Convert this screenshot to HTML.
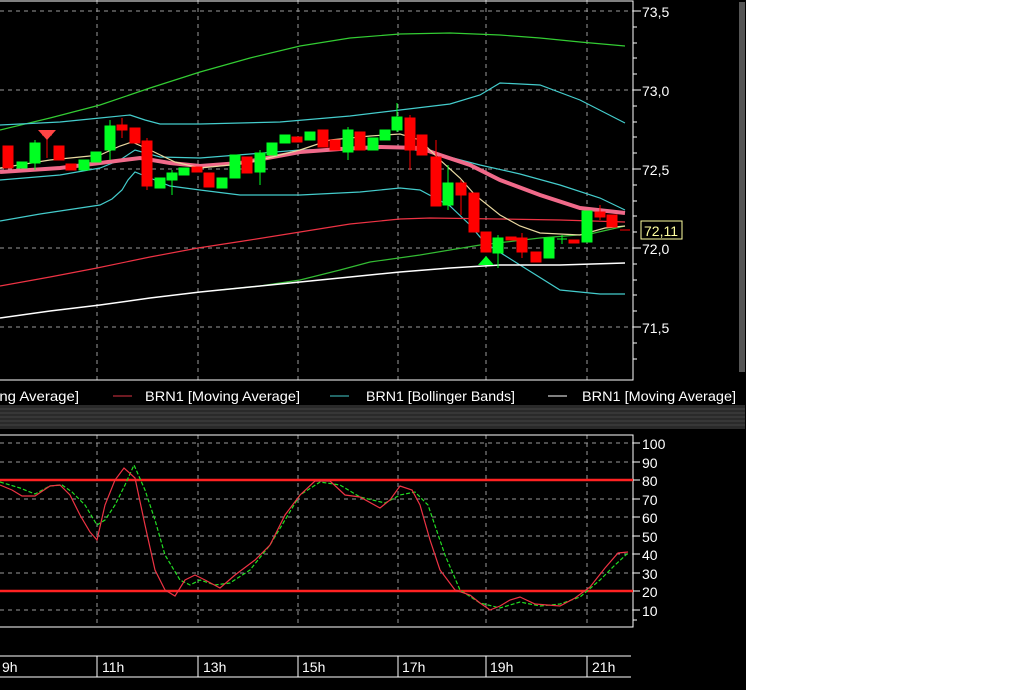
<!DOCTYPE html>
<html><head><meta charset="utf-8"><style>
html,body{margin:0;padding:0;background:#fff;width:1024px;height:690px;overflow:hidden}
svg{display:block}
text{font-family:"Liberation Sans",sans-serif;fill:#fff}
</style></head><body>
<svg width="1024" height="690" viewBox="0 0 1024 690" xmlns="http://www.w3.org/2000/svg">
<rect x="0" y="0" width="746" height="690" fill="#000"/>
<rect x="739" y="2" width="6" height="370" fill="#555"/>
<!-- upper panel -->
<g stroke="#9a9a9a" stroke-dasharray="4,4" stroke-width="1">
<line x1="0" y1="11" x2="633" y2="11"/><line x1="0" y1="90" x2="633" y2="90"/><line x1="0" y1="169" x2="633" y2="169"/><line x1="0" y1="248" x2="633" y2="248"/><line x1="0" y1="327" x2="633" y2="327"/>
<line x1="97" y1="0" x2="97" y2="380"/><line x1="198" y1="0" x2="198" y2="380"/><line x1="298" y1="0" x2="298" y2="380"/><line x1="398" y1="0" x2="398" y2="380"/><line x1="486" y1="0" x2="486" y2="380"/><line x1="587" y1="0" x2="587" y2="380"/>
</g>
<polyline fill="none" stroke="#fff" stroke-width="1" points="0,1 633,1 633,380 0,380"/>
<g stroke="#fff" stroke-width="1">
<line x1="633" y1="11" x2="641" y2="11"/><line x1="633" y1="90" x2="641" y2="90"/><line x1="633" y1="169" x2="641" y2="169"/><line x1="633" y1="248" x2="641" y2="248"/><line x1="633" y1="327" x2="641" y2="327"/>
<line x1="633" y1="27" x2="637" y2="27"/><line x1="633" y1="43" x2="637" y2="43"/><line x1="633" y1="58" x2="637" y2="58"/><line x1="633" y1="74" x2="637" y2="74"/>
<line x1="633" y1="106" x2="637" y2="106"/><line x1="633" y1="122" x2="637" y2="122"/><line x1="633" y1="137" x2="637" y2="137"/><line x1="633" y1="153" x2="637" y2="153"/>
<line x1="633" y1="185" x2="637" y2="185"/><line x1="633" y1="201" x2="637" y2="201"/><line x1="633" y1="216" x2="637" y2="216"/><line x1="633" y1="232" x2="637" y2="232"/>
<line x1="633" y1="264" x2="637" y2="264"/><line x1="633" y1="280" x2="637" y2="280"/><line x1="633" y1="295" x2="637" y2="295"/><line x1="633" y1="311" x2="637" y2="311"/>
<line x1="633" y1="343" x2="637" y2="343"/><line x1="633" y1="359" x2="637" y2="359"/>
</g>
<g font-size="14"><text x="642" y="17">73,5</text><text x="642" y="96">73,0</text><text x="642" y="175">72,5</text><text x="642" y="254">72,0</text><text x="642" y="333">71,5</text></g>
<rect x="641" y="221" width="41" height="18" fill="#000" stroke="#ffffa0"/>
<text x="644" y="236" font-size="14" style="fill:#ffffa0">72,11</text>
<!-- lines -->
<g fill="none">
<polyline stroke="#3c3" stroke-width="1.2" points="0,130 50,118 100,105 150,88 200,72 250,58 300,46 350,38 400,34 450,33 500,35 540,38 580,42 625,46"/>
<polyline stroke="#4cc" stroke-width="1.2" points="0,125 60,122 100,118 130,115 145,120 160,124 200,124 280,122 350,116 400,110 450,104 480,95 500,83 540,85 580,100 625,123"/>
<polyline stroke="#4cc" stroke-width="1.2" points="0,180 60,175 100,168 120,160 135,150 160,157 200,158 300,150 400,148 430,152 480,165 520,174 560,185 600,198 625,210"/>
<polyline stroke="#4cc" stroke-width="1.2" points="0,221 40,214 100,205 112,199 122,190 128,180 135,172 150,178 170,186 200,190 240,195 300,195 360,192 400,188 420,190 450,206 470,225 485,243 520,265 560,290 600,294 625,294"/>
<polyline stroke="#e34" stroke-width="1.2" points="0,286 50,277 97,268 150,257 198,248 250,240 300,232 350,224 400,219 430,218 500,219 560,220 625,222"/>
<polyline stroke="#3b3" stroke-width="1.2" points="220,290 260,286 300,280 340,270 370,262 420,255 480,245 540,238 590,234 625,226"/>
<polyline stroke="#fff" stroke-width="1.5" points="0,318 50,311 100,305 150,298 200,292 250,287 300,282 350,277 400,272 450,268 500,265 560,265 625,263"/>
<polyline stroke="#f06a8a" stroke-width="4" points="0,172 60,168 100,163 140,158 170,163 200,166 240,163 300,152 340,149 380,147 420,148 440,155 470,165 500,180 540,195 580,208 625,213"/>
<polyline stroke="#e8d8a0" stroke-width="1.2" points="0,168 50,160 100,155 120,146 132,142 150,150 175,162 200,168 230,165 260,160 300,150 330,140 370,136 400,134 420,140 440,160 460,178 475,195 500,215 520,226 540,233 580,235 605,228 625,226"/>
</g>
<!-- candles -->
<g stroke-width="1">
<g fill="#f00" stroke="#f00">
<rect x="3" y="146" width="10" height="22"/><rect x="54" y="146" width="10" height="14"/><rect x="66" y="164" width="10" height="6"/><rect x="117" y="125" width="10" height="5"/><line x1="122" y1="118" x2="122" y2="138"/><rect x="130" y="128" width="10" height="15"/><rect x="142" y="141" width="10" height="45"/><line x1="147" y1="138" x2="147" y2="190"/><rect x="192" y="167" width="10" height="5"/><rect x="204" y="173" width="10" height="14"/><rect x="242" y="157" width="10" height="16"/><rect x="292" y="137" width="10" height="5"/><rect x="318" y="130" width="10" height="17"/><rect x="330" y="140" width="10" height="10"/><rect x="355" y="132" width="10" height="18"/><rect x="405" y="118" width="10" height="32"/><line x1="410" y1="115" x2="410" y2="170"/><rect x="417" y="135" width="10" height="20"/><rect x="431" y="157" width="10" height="49"/><line x1="436" y1="140" x2="436" y2="206"/><rect x="456" y="183" width="10" height="12"/><line x1="461" y1="180" x2="461" y2="215"/><rect x="469" y="193" width="10" height="39"/><rect x="481" y="232" width="10" height="20"/><rect x="506" y="237" width="10" height="3"/><rect x="517" y="238" width="10" height="14"/><line x1="522" y1="233" x2="522" y2="258"/><rect x="531" y="252" width="10" height="10"/><rect x="569" y="240" width="10" height="3"/><rect x="595" y="212" width="10" height="5"/><line x1="600" y1="205" x2="600" y2="220"/><rect x="607" y="215" width="10" height="12"/><line x1="620" y1="230" x2="630" y2="230"/>
<line x1="42" y1="135" x2="52" y2="135"/><line x1="47" y1="135" x2="47" y2="158"/>
</g>
<polygon points="38,130 56,130 47,140" fill="#f44"/>
<g fill="#0f2" stroke="#0f2">
<rect x="17" y="162" width="10" height="6"/><rect x="30" y="143" width="10" height="20"/><line x1="35" y1="140" x2="35" y2="170"/><rect x="79" y="160" width="10" height="10"/><rect x="91" y="152" width="10" height="10"/><rect x="105" y="126" width="10" height="24"/><line x1="110" y1="120" x2="110" y2="160"/><rect x="155" y="178" width="10" height="10"/><rect x="167" y="173" width="10" height="7"/><line x1="172" y1="170" x2="172" y2="195"/><rect x="179" y="168" width="10" height="7"/><rect x="217" y="178" width="10" height="10"/><rect x="230" y="155" width="10" height="23"/><rect x="255" y="153" width="10" height="19"/><line x1="260" y1="150" x2="260" y2="185"/><rect x="267" y="143" width="10" height="12"/><rect x="280" y="135" width="10" height="8"/><rect x="305" y="132" width="10" height="8"/><rect x="343" y="130" width="10" height="22"/><line x1="348" y1="127" x2="348" y2="160"/><rect x="368" y="138" width="10" height="12"/><rect x="380" y="130" width="10" height="10"/><rect x="392" y="117" width="10" height="13"/><line x1="397" y1="103" x2="397" y2="132"/><rect x="443" y="183" width="10" height="22"/><line x1="448" y1="165" x2="448" y2="210"/><rect x="493" y="238" width="10" height="15"/><line x1="498" y1="235" x2="498" y2="268"/><rect x="544" y="238" width="10" height="20"/><line x1="557" y1="239" x2="567" y2="239"/><line x1="562" y1="235" x2="562" y2="244"/><rect x="582" y="211" width="10" height="31"/>
</g>
<polygon points="478,265 494,265 486,256" fill="#0f2"/>
</g>
<!-- legend -->
<g font-size="14">
<text x="-4" y="401" textLength="83" lengthAdjust="spacingAndGlyphs">ing Average]</text>
<line x1="113" y1="396" x2="132" y2="396" stroke="#d34"/><text x="145" y="401" textLength="155" lengthAdjust="spacingAndGlyphs">BRN1 [Moving Average]</text>
<line x1="330" y1="396" x2="349" y2="396" stroke="#4cc"/><text x="366" y="401" textLength="149" lengthAdjust="spacingAndGlyphs">BRN1 [Bollinger Bands]</text>
<line x1="548" y1="396" x2="567" y2="396" stroke="#fff"/><text x="582" y="401" textLength="154" lengthAdjust="spacingAndGlyphs">BRN1 [Moving Average]</text>
</g>
<!-- separator -->
<rect x="0" y="405" width="745" height="24" fill="#2a2a2a"/>
<g stroke="#444"><line x1="0" y1="409" x2="745" y2="409"/><line x1="0" y1="413" x2="745" y2="413"/><line x1="0" y1="417" x2="745" y2="417"/><line x1="0" y1="421" x2="745" y2="421"/><line x1="0" y1="425" x2="745" y2="425"/></g>
<!-- lower panel -->
<g stroke="#9a9a9a" stroke-dasharray="4,4">
<line x1="0" y1="443" x2="633" y2="443"/><line x1="0" y1="462" x2="633" y2="462"/><line x1="0" y1="499" x2="633" y2="499"/><line x1="0" y1="517" x2="633" y2="517"/><line x1="0" y1="536" x2="633" y2="536"/><line x1="0" y1="554" x2="633" y2="554"/><line x1="0" y1="573" x2="633" y2="573"/><line x1="0" y1="610" x2="633" y2="610"/>
<line x1="97" y1="435" x2="97" y2="627"/><line x1="198" y1="435" x2="198" y2="627"/><line x1="298" y1="435" x2="298" y2="627"/><line x1="398" y1="435" x2="398" y2="627"/><line x1="486" y1="435" x2="486" y2="627"/><line x1="587" y1="435" x2="587" y2="627"/>
</g>
<polyline fill="none" stroke="#fff" points="0,435 633,435 633,627 0,627"/>
<g stroke="#fff"><line x1="633" y1="443" x2="640" y2="443"/><line x1="633" y1="462" x2="640" y2="462"/><line x1="633" y1="480" x2="640" y2="480"/><line x1="633" y1="499" x2="640" y2="499"/><line x1="633" y1="517" x2="640" y2="517"/><line x1="633" y1="536" x2="640" y2="536"/><line x1="633" y1="554" x2="640" y2="554"/><line x1="633" y1="573" x2="640" y2="573"/><line x1="633" y1="591" x2="640" y2="591"/><line x1="633" y1="610" x2="640" y2="610"/><line x1="633" y1="620" x2="637" y2="620"/></g>
<g font-size="14"><text x="642" y="449">100</text><text x="642" y="468">90</text><text x="642" y="486">80</text><text x="642" y="505">70</text><text x="642" y="523">60</text><text x="642" y="542">50</text><text x="642" y="560">40</text><text x="642" y="579">30</text><text x="642" y="597">20</text><text x="642" y="616">10</text></g>
<line x1="0" y1="480" x2="633" y2="480" stroke="#f22" stroke-width="2.5"/>
<line x1="0" y1="591" x2="633" y2="591" stroke="#f22" stroke-width="2.5"/>
<polyline fill="none" stroke="#2d2" stroke-width="1.2" stroke-dasharray="4,2" points="0,482 20,488 35,494 50,486 62,485 72,492 85,505 97,525 105,520 115,505 125,485 134,465 145,490 155,520 165,555 180,580 190,585 200,580 215,585 230,583 250,570 270,545 285,520 300,495 320,482 340,485 360,497 385,503 400,495 415,492 428,505 445,555 460,590 480,603 500,608 520,602 540,606 560,604 580,597 600,580 615,565 628,553"/>
<polyline fill="none" stroke="#e34" stroke-width="1.2" points="0,485 12,490 22,496 35,496 50,486 60,485 70,495 80,515 90,532 97,540 105,505 115,480 124,468 135,478 145,525 155,570 165,590 175,596 185,580 195,575 205,580 220,588 235,575 255,560 270,545 285,515 300,495 315,481 330,481 345,495 360,497 380,508 390,500 400,486 412,490 420,505 430,540 440,570 455,590 470,595 480,603 490,610 500,606 510,600 520,597 535,604 560,606 575,598 590,587 605,568 618,553 628,552"/>
<!-- time axis -->
<g stroke="#fff"><line x1="0" y1="656" x2="631" y2="656"/><line x1="0" y1="677" x2="631" y2="677"/>
<line x1="97" y1="656" x2="97" y2="677"/><line x1="198" y1="656" x2="198" y2="677"/><line x1="298" y1="656" x2="298" y2="677"/><line x1="398" y1="656" x2="398" y2="677"/><line x1="486" y1="656" x2="486" y2="677"/><line x1="587" y1="656" x2="587" y2="677"/></g>
<g font-size="14"><text x="2" y="672">9h</text><text x="102" y="672">11h</text><text x="203" y="672">13h</text><text x="302" y="672">15h</text><text x="402" y="672">17h</text><text x="490" y="672">19h</text><text x="592" y="672">21h</text></g>
</svg>
</body></html>
